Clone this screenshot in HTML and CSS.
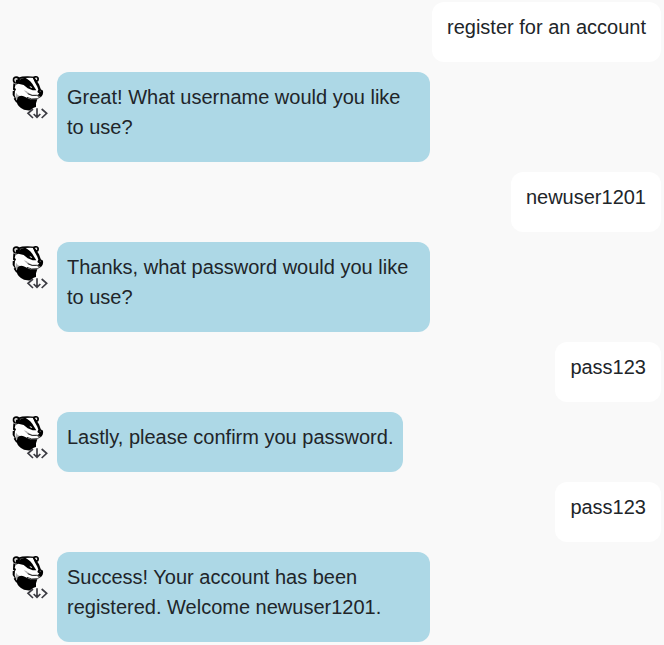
FILE: index.html
```html
<!DOCTYPE html>
<html lang="en">
<head>
<meta charset="utf-8">
<title>Chat</title>
<link rel="stylesheet" href="styles.css">
</head>
<body>
<svg class="sprite" aria-hidden="true">
  <symbol id="badger" viewBox="12 9 108 138">
    <path fill="#fff" d="M20 32L34 21L82 21L96 50L104 62L97 82L84 88L40 96L20 90L15 66Z"/>
    <circle cx="25" cy="30" r="11"/>
    <path fill="#d8d8d8" d="M20 34Q16 25 25 24Q29 25 30 28L24 30L23 38Z"/>
    <path d="M75 24Q76 17 84 18Q93 19 93 27Q93 34 87 36L80 33Z"/>
    <path fill="#ddd" d="M80 24Q87 20 88 27Q88 31 84 31Z"/>
    <path d="M30 23Q45 17 80 20V24Q55 22 35 27Z"/>
    <path d="M38 26L52 23Q69 32 77 48L85 61L74 61L59 55L47 45L31 41L22 45L33 35Z"/>
    <path d="M74 22L82 26L93 43L99 59L93 65L88 50L80 36Z"/>
    <path d="M90 61Q98 56 105 62Q107 74 98 82L88 75L94 71L88 66Z"/>
    <path fill="#999" d="M94 63L100 62L97 65Z"/>
    <path fill="#fff" d="M64 47L73 52L69 54Z"/>
    <path fill="#bbb" d="M47 61Q55 62 63 69L73 74L86 74L90 78L80 78L66 75L55 69Z"/>
    <path fill="none" stroke="#222" stroke-width="3" d="M59 71Q72 79 86 76L94 80"/>
    <path fill="none" stroke="#333" stroke-width="3" d="M57 82L71 87L88 86L98 80"/>
    <path d="M16 40L23 43L20 54L24 57L22 62L15 59ZM14 64L21 61L20 76L26 90L34 101L24 97L17 86L20 84L14 75Z"/>
    <path fill="#b0b0b0" d="M24 68Q28 76 38 79L49 80L56 83L43 82Q31 84 31 98L24 88Q22 78 24 68Z"/>
    <path d="M29 82Q36 74 50 80L66 88L88 88L84 100L84 122Q66 123 48 119Q27 110 26 94Z"/>
    <path fill="#f9f9f9" d="M66 121L77 113L92 108L119 121V147H60V128Z"/>
    <path fill="none" stroke="#3b3b42" stroke-width="5" d="M75 117L60 130L75 144M101 117L116 130L101 144M87 115V142M77 132L87 142L97 132"/>
  </symbol>
</svg>
<main class="chat">
  <div class="message user"><p class="bubble">register for an account</p></div>
  <div class="message bot"><svg class="avatar" role="img" aria-label="Badger bot"><use href="#badger"/></svg><p class="bubble">Great! What username would you like to use?</p></div>
  <div class="message user"><p class="bubble">newuser1201</p></div>
  <div class="message bot"><svg class="avatar" role="img" aria-label="Badger bot"><use href="#badger"/></svg><p class="bubble">Thanks, what password would you like to use?</p></div>
  <div class="message user"><p class="bubble">pass123</p></div>
  <div class="message bot"><svg class="avatar" role="img" aria-label="Badger bot"><use href="#badger"/></svg><p class="bubble">Lastly, please confirm you password.</p></div>
  <div class="message user"><p class="bubble">pass123</p></div>
  <div class="message bot"><svg class="avatar" role="img" aria-label="Badger bot"><use href="#badger"/></svg><p class="bubble">Success! Your account has been registered. Welcome newuser1201.</p></div>
</main>
</body>
</html>
```

FILE: styles.css
```css
* {
  box-sizing: border-box;
}

body {
  margin: 0;
  background: #f9f9f9;
  color: #212529;
  font: 20px/30px "Liberation Sans", Arial, sans-serif;
}

.sprite {
  position: absolute;
  width: 0;
  height: 0;
}

.chat {
  display: flex;
  flex-direction: column;
  gap: 10px;
  padding: 2px 3px 3px 12px;
}

.message {
  display: flex;
  align-items: flex-start;
  gap: 9px;
}

.user {
  justify-content: flex-end;
}

.avatar {
  flex: none;
  width: 36px;
  height: 46px;
  margin-top: 1px;
}

.bubble {
  margin: 0;
  padding: 10px 10px 20px;
  border-radius: 12px;
}

.bot .bubble {
  max-width: 373px;
  background: #add8e6;
}

.user .bubble {
  padding-inline: 15px;
  background: #fff;
}
```
